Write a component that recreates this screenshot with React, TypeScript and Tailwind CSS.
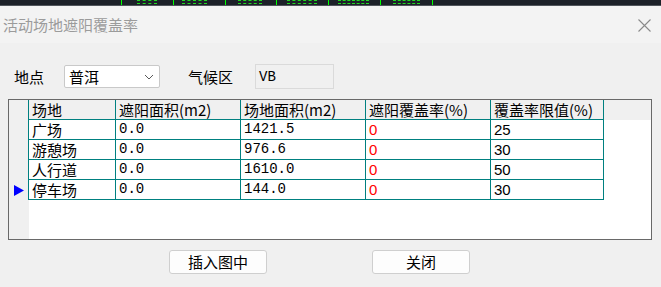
import React from 'react'

const cjk = "font-['Noto_Sans_CJK_SC',sans-serif]"
const mono = "font-['Liberation_Mono','Noto_Sans_CJK_SC',monospace]"
const sans = "font-['Liberation_Sans',sans-serif]"

const cols = [
  { label: '场地', w: 'w-[87px]' },
  { label: '遮阳面积(m2)', w: 'w-[125px]' },
  { label: '场地面积(m2)', w: 'w-[125px]' },
  { label: '遮阳覆盖率(%)', w: 'w-[125px]' },
  { label: '覆盖率限值(%)', w: 'w-[113px]' },
]

const rows = [
  ['广场', '0.0', '1421.5', '0', '25'],
  ['游憩场', '0.0', '976.6', '0', '30'],
  ['人行道', '0.0', '1610.0', '0', '50'],
  ['停车场', '0.0', '144.0', '0', '30'],
]

// bits of the app window behind the dialog
const greenLines = [121, 173, 225, 276, 328, 380, 432]
const greenBlobs = [[137, 20], [182, 25], [238, 24], [287, 30], [338, 31], [393, 27]]

function cellClass(i: number) {
  if (i === 0) return `${cjk} text-[15px] text-black`
  if (i === 1 || i === 2) return `${mono} text-[14px] text-black`
  if (i === 3) return `${sans} text-[15px] text-[#ff0000]`
  return `${sans} text-[15px] text-black`
}

export default function App() {
  const [place, setPlace] = React.useState('普洱')
  const [current, setCurrent] = React.useState(3)

  return (
    <div className="w-[661px] h-[287px] bg-[#f0f0f0] flex flex-col overflow-hidden select-none">
      <div className="h-[5px] bg-[#1c2128] relative shrink-0">
        {greenLines.map(x => (
          <div key={x} className="absolute top-0 h-[5px] w-px bg-[#00ff00]" style={{ left: x }} />
        ))}
        {greenBlobs.map(([x, w]) => (
          <div key={x} className="absolute top-0 h-[4px] border-y border-dashed border-[#22d822]" style={{ left: x, width: w }} />
        ))}
      </div>
      <div className="h-px bg-[#50555b] shrink-0" />

      <div className="h-[37px] bg-[#f3f3f3] flex items-center justify-between pl-[3px] pr-[10px] shrink-0">
        <div className={`${cjk} text-[15px] leading-[20px] text-[#9b9b9b]`}>活动场地遮阳覆盖率</div>
        <svg width="13" height="13" viewBox="0 0 13 13" className="mt-[1px]">
          <path d="M0.5 0.5L12.5 12.5M12.5 0.5L0.5 12.5" stroke="#8a8a8a" strokeWidth="1.1" fill="none" />
        </svg>
      </div>

      <div className="flex items-center h-[25px] mt-[21px] shrink-0">
        <div className={`${cjk} text-[15px] leading-[20px] text-black ml-[14px] w-[50px]`}>地点</div>
        <div className="w-[96px] h-[23px] bg-white border border-[#c9c9c9] rounded-[2px] flex items-center justify-between pl-[4px] pr-[5px]">
          <span className={`${cjk} text-[15px] leading-[20px] text-black`}>{place}</span>
          <svg width="10" height="6" viewBox="0 0 10 6" onClick={() => setPlace(place)}>
            <path d="M1 1L5 5L9 1" stroke="#5a5a5a" strokeWidth="1" fill="none" />
          </svg>
        </div>
        <div className={`${cjk} text-[15px] leading-[20px] text-black ml-[28px] w-[67px]`}>气候区</div>
        <div className="w-[79px] h-[25px] border border-[#dadada] bg-[#f0f0f0] flex items-center pl-[3px]">
          <span className={`${mono} text-[14px] leading-[18px] text-black`}>VB</span>
        </div>
      </div>

      <div className="mt-[10px] ml-[8px] w-[644px] h-[141px] border border-[#696969] bg-white flex shrink-0">
        <div className="w-[20px] bg-[#f0f0f0] flex flex-col">
          <div className="h-[20px] border-r border-[#008080]" />
          {rows.map((_, r) => (
            <div key={r} onClick={() => setCurrent(r)}
              className="h-[20px] border-r border-[#008080] flex items-center pl-[5px]">
              {current === r ? (
                <svg width="10" height="11" viewBox="0 0 10 11">
                  <path d="M0 0L10 5.5L0 11Z" fill="#0000ff" />
                </svg>
              ) : null}
            </div>
          ))}
        </div>
        <div className="flex-1 flex flex-col">
          <div className="flex h-[20px] bg-[#f0f0f0]">
            {cols.map(c => (
              <div key={c.label}
                className={`${c.w} h-[20px] border-r border-b border-[#008080] pl-[3px] ${cjk} text-[15px] leading-[19px] text-black whitespace-nowrap overflow-hidden`}>
                {c.label}
              </div>
            ))}
          </div>
          {rows.map((row, r) => (
            <div key={r} className="flex h-[20px]">
              {row.map((v, i) => (
                <div key={i}
                  className={`${cols[i].w} h-[20px] border-r border-b border-[#008080] pl-[3px] leading-[19px] whitespace-nowrap ${cellClass(i)}`}>
                  {v}
                </div>
              ))}
            </div>
          ))}
        </div>
      </div>

      <div className="flex mt-[10px] ml-[169px] gap-[105px] shrink-0">
        <button className={`w-[98px] h-[24px] bg-[#fdfdfd] border border-[#cfcfcf] rounded-[3px] ${cjk} text-[15px] leading-[20px] text-black`}>
          插入图中
        </button>
        <button className={`w-[98px] h-[24px] bg-[#fdfdfd] border border-[#cfcfcf] rounded-[3px] ${cjk} text-[15px] leading-[20px] text-black`}>
          关闭
        </button>
      </div>
    </div>
  )
}
